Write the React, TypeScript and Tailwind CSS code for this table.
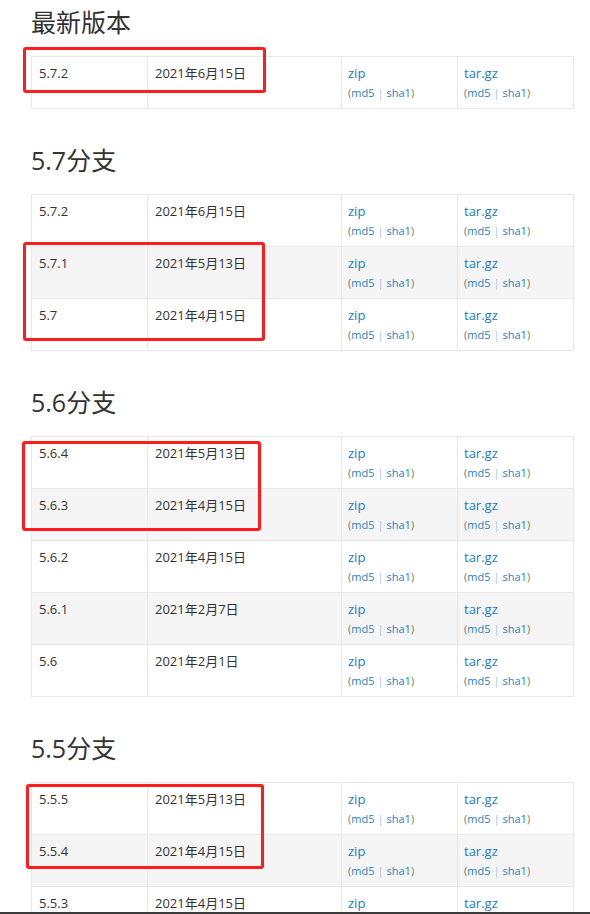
import React from 'react';

type Row = { v: string; d: string };

const sections: { title: string; rows: Row[] }[] = [
  { title: '最新版本', rows: [{ v: '5.7.2', d: '2021年6月15日' }] },
  {
    title: '5.7分支',
    rows: [
      { v: '5.7.2', d: '2021年6月15日' },
      { v: '5.7.1', d: '2021年5月13日' },
      { v: '5.7', d: '2021年4月15日' },
    ],
  },
  {
    title: '5.6分支',
    rows: [
      { v: '5.6.4', d: '2021年5月13日' },
      { v: '5.6.3', d: '2021年4月15日' },
      { v: '5.6.2', d: '2021年4月15日' },
      { v: '5.6.1', d: '2021年2月7日' },
      { v: '5.6', d: '2021年2月1日' },
    ],
  },
  {
    title: '5.5分支',
    rows: [
      { v: '5.5.5', d: '2021年5月13日' },
      { v: '5.5.4', d: '2021年4月15日' },
      { v: '5.5.3', d: '2021年4月15日' },
    ],
  },
];

// red annotation boxes drawn over the screenshot
const marks = [
  'left-[23px] top-[47px] w-[243px] h-[46px]',
  'left-[23px] top-[242px] w-[242px] h-[99px]',
  'left-[22px] top-[441px] w-[239px] h-[90px]',
  'left-[26px] top-[784px] w-[238px] h-[85px]',
];

function Download({ label }: { label: string }) {
  return (
    <div className="border-l border-[#e8e8e8] px-[6px] pt-[6px]">
      <a className="block text-[13px] leading-[20px] text-[#1a7cc0]">{label}</a>
      <p className="text-[11px] leading-[20px] text-[#8a7550]">
        (<a className="text-[#2a80c2]">md5</a>
        <span className="mx-[3px] text-[#9ec6e6]">|</span>
        <a className="text-[#2a80c2]">sha1</a>)
      </p>
    </div>
  );
}

function Table({ rows }: { rows: Row[] }) {
  return (
    <div className="w-[543px] border border-[#e8e8e8]">
      {rows.map((r, i) => (
        <div
          key={i}
          className={`grid grid-cols-[115px_194px_116px_116px] ${i > 0 ? 'h-[52px] border-t border-[#e8e8e8]' : 'h-[51px]'} ${i % 2 === 1 ? 'bg-[#f5f5f5]' : 'bg-white'}`}
        >
          <div className="px-[7px] pt-[6px] text-[13px] leading-[20px] text-[#333]">{r.v}</div>
          <div className="border-l border-[#e8e8e8] px-[7px] pt-[6px] text-[13px] leading-[20px] text-[#333]">{r.d}</div>
          <Download label="zip" />
          <Download label="tar.gz" />
        </div>
      ))}
    </div>
  );
}

export default function App() {
  return (
    <div
      className="relative h-[914px] w-[590px] overflow-hidden border-b-2 border-[#3a3a3a] bg-white pl-[31px] pt-[8px]"
      style={{ fontFamily: '"Open Sans", "Noto Sans CJK SC", sans-serif' }}
    >
      {sections.map((s, i) => (
        <section key={s.title} className={i > 0 ? 'mt-[37px]' : ''}>
          <h2 className="mb-[19px] text-[25px] leading-[29px] text-[#333]">{s.title}</h2>
          <Table rows={s.rows} />
        </section>
      ))}
      {marks.map((m) => (
        <div key={m} className={`pointer-events-none absolute rounded-[3px] border-[3px] border-[#ff1c1c] ${m}`} />
      ))}
    </div>
  );
}
